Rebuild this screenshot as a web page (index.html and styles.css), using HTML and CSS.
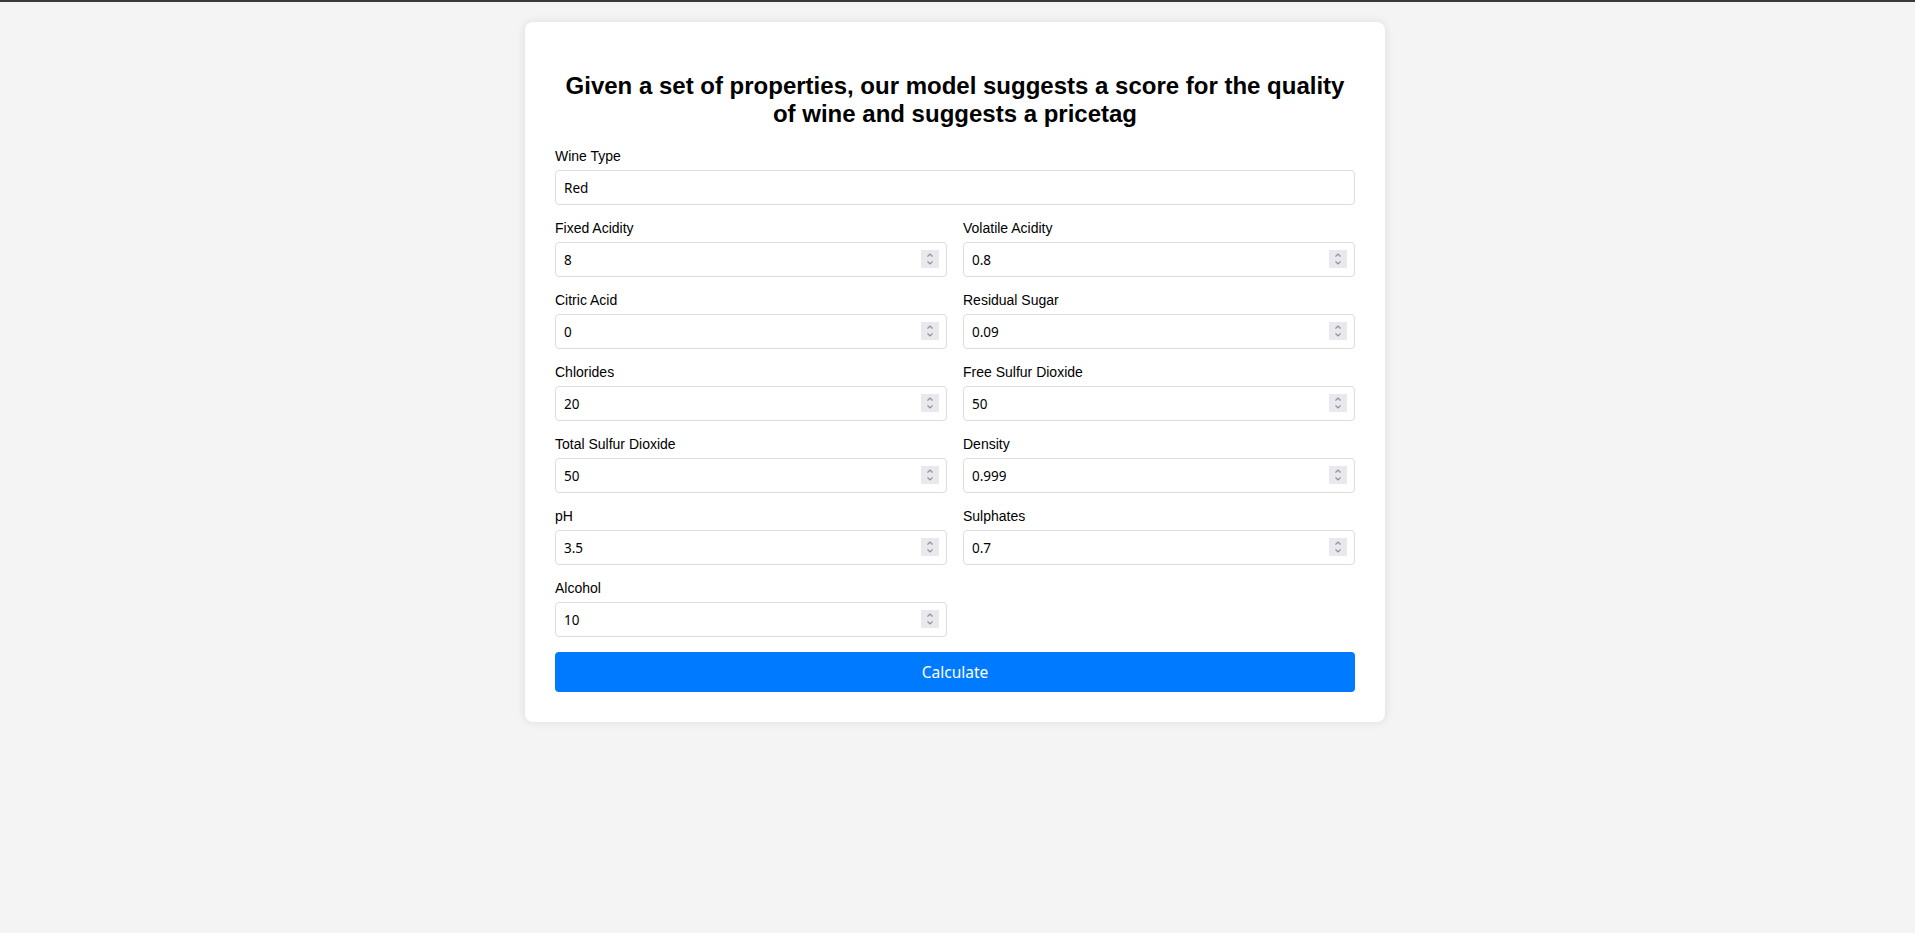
FILE: index.html
```html
<!DOCTYPE html>
<html lang="en">
<head>
<meta charset="utf-8">
<title>Wine Quality</title>
<link rel="stylesheet" href="styles.css">
</head>
<body>
<div class="page">
  <div class="card">
    <h2 class="title">Given a set of properties, our model suggests a score for the quality of wine and suggests a pricetag</h2>
    <form class="form">
      <div class="group">
        <label class="label">Wine Type</label>
        <input class="field" type="text" value="Red">
      </div>
      <div class="grid">
        <div class="group">
          <label class="label">Fixed Acidity</label>
          <div class="num"><input class="field" type="number" value="8"><span class="spin"><svg width="18" height="18" viewBox="0 0 18 18"><path d="M6.5 6.5 9 4 11.5 6.5M6.5 11.5 9 14 11.5 11.5" fill="none" stroke="#8d8d99" stroke-width="1.1"/></svg></span></div>
        </div>
        <div class="group">
          <label class="label">Volatile Acidity</label>
          <div class="num"><input class="field" type="number" value="0.8"><span class="spin"><svg width="18" height="18" viewBox="0 0 18 18"><path d="M6.5 6.5 9 4 11.5 6.5M6.5 11.5 9 14 11.5 11.5" fill="none" stroke="#8d8d99" stroke-width="1.1"/></svg></span></div>
        </div>
        <div class="group">
          <label class="label">Citric Acid</label>
          <div class="num"><input class="field" type="number" value="0"><span class="spin"><svg width="18" height="18" viewBox="0 0 18 18"><path d="M6.5 6.5 9 4 11.5 6.5M6.5 11.5 9 14 11.5 11.5" fill="none" stroke="#8d8d99" stroke-width="1.1"/></svg></span></div>
        </div>
        <div class="group">
          <label class="label">Residual Sugar</label>
          <div class="num"><input class="field" type="number" value="0.09"><span class="spin"><svg width="18" height="18" viewBox="0 0 18 18"><path d="M6.5 6.5 9 4 11.5 6.5M6.5 11.5 9 14 11.5 11.5" fill="none" stroke="#8d8d99" stroke-width="1.1"/></svg></span></div>
        </div>
        <div class="group">
          <label class="label">Chlorides</label>
          <div class="num"><input class="field" type="number" value="20"><span class="spin"><svg width="18" height="18" viewBox="0 0 18 18"><path d="M6.5 6.5 9 4 11.5 6.5M6.5 11.5 9 14 11.5 11.5" fill="none" stroke="#8d8d99" stroke-width="1.1"/></svg></span></div>
        </div>
        <div class="group">
          <label class="label">Free Sulfur Dioxide</label>
          <div class="num"><input class="field" type="number" value="50"><span class="spin"><svg width="18" height="18" viewBox="0 0 18 18"><path d="M6.5 6.5 9 4 11.5 6.5M6.5 11.5 9 14 11.5 11.5" fill="none" stroke="#8d8d99" stroke-width="1.1"/></svg></span></div>
        </div>
        <div class="group">
          <label class="label">Total Sulfur Dioxide</label>
          <div class="num"><input class="field" type="number" value="50"><span class="spin"><svg width="18" height="18" viewBox="0 0 18 18"><path d="M6.5 6.5 9 4 11.5 6.5M6.5 11.5 9 14 11.5 11.5" fill="none" stroke="#8d8d99" stroke-width="1.1"/></svg></span></div>
        </div>
        <div class="group">
          <label class="label">Density</label>
          <div class="num"><input class="field" type="number" value="0.999"><span class="spin"><svg width="18" height="18" viewBox="0 0 18 18"><path d="M6.5 6.5 9 4 11.5 6.5M6.5 11.5 9 14 11.5 11.5" fill="none" stroke="#8d8d99" stroke-width="1.1"/></svg></span></div>
        </div>
        <div class="group">
          <label class="label">pH</label>
          <div class="num"><input class="field" type="number" value="3.5"><span class="spin"><svg width="18" height="18" viewBox="0 0 18 18"><path d="M6.5 6.5 9 4 11.5 6.5M6.5 11.5 9 14 11.5 11.5" fill="none" stroke="#8d8d99" stroke-width="1.1"/></svg></span></div>
        </div>
        <div class="group">
          <label class="label">Sulphates</label>
          <div class="num"><input class="field" type="number" value="0.7"><span class="spin"><svg width="18" height="18" viewBox="0 0 18 18"><path d="M6.5 6.5 9 4 11.5 6.5M6.5 11.5 9 14 11.5 11.5" fill="none" stroke="#8d8d99" stroke-width="1.1"/></svg></span></div>
        </div>
        <div class="group">
          <label class="label">Alcohol</label>
          <div class="num"><input class="field" type="number" value="10"><span class="spin"><svg width="18" height="18" viewBox="0 0 18 18"><path d="M6.5 6.5 9 4 11.5 6.5M6.5 11.5 9 14 11.5 11.5" fill="none" stroke="#8d8d99" stroke-width="1.1"/></svg></span></div>
        </div>
      </div>
      <button class="btn" type="button">Calculate</button>
    </form>
  </div>
</div>
</body>
</html>
```
FILE: styles.css
```css
html, body {
  margin: 0;
  padding: 0;
}
body {
  background: #f4f4f4;
  font-family: "Liberation Sans", Arial, sans-serif;
  color: #000;
  border-top: 2px solid #3a3a3a;
  min-height: 931px;
  box-sizing: border-box;
}
.page {
  padding: 20px 5px 20px 0;
  display: flex;
  justify-content: center;
}
.card {
  width: 800px;
  padding: 30px;
  background: #fff;
  border-radius: 8px;
  box-shadow: 0 0 10px rgba(0, 0, 0, 0.1);
}
.title {
  font-size: 24px;
  font-weight: bold;
  text-align: center;
  margin: 20px 0;
}
.form {
  display: flex;
  flex-direction: column;
}
.grid {
  display: grid;
  grid-template-columns: 1fr 1fr;
  column-gap: 16px;
}
.group {
  display: flex;
  flex-direction: column;
  margin-bottom: 15px;
}
.label {
  font-size: 14px;
  line-height: 17px;
  margin-bottom: 5px;
}
.num {
  position: relative;
  display: flex;
  flex-direction: column;
}
.field {
  box-sizing: border-box;
  width: 100%;
  height: 35px;
  padding: 8px;
  border: 1px solid #ddd;
  border-radius: 4px;
  font-family: "Noto Sans", "Open Sans", sans-serif;
  font-size: 13.5px;
  background: #fff;
  color: #000;
}
.field::-webkit-inner-spin-button,
.field::-webkit-outer-spin-button {
  -webkit-appearance: none;
  margin: 0;
}
.spin {
  position: absolute;
  right: 8px;
  top: 8px;
  width: 18px;
  height: 18px;
  background: #e9e9ed;
  display: flex;
}
.btn {
  height: 40px;
  border: none;
  border-radius: 4px;
  background: #007bff;
  color: #fff;
  font-family: "Noto Sans", "Open Sans", sans-serif;
  font-size: 15.5px;
  cursor: pointer;
}
```
